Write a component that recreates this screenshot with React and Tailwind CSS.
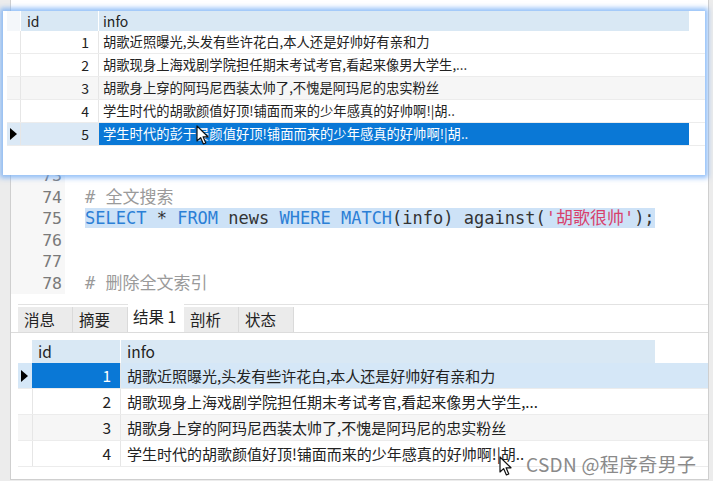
const popupRows = [
  "胡歌近照曝光,头发有些许花白,本人还是好帅好有亲和力",
  "胡歌现身上海戏剧学院担任期末考试考官,看起来像男大学生,...",
  "胡歌身上穿的阿玛尼西装太帅了,不愧是阿玛尼的忠实粉丝",
  "学生时代的胡歌颜值好顶!铺面而来的少年感真的好帅啊!|胡..",
  "学生时代的彭于晏颜值好顶!铺面而来的少年感真的好帅啊!|胡..",
];

const resultRows = popupRows.slice(0, 4);

const cjk = { fontFamily: '"Noto Sans CJK SC", "Liberation Sans", sans-serif' };
const mono = { fontFamily: '"DejaVu Sans Mono", "Noto Sans CJK SC", monospace' };

function Cursor({ className }) {
  return (
    <svg className={className} width="14" height="21" viewBox="0 0 14 21">
      <path
        d="M1 1 L1 16 L4.6 12.6 L7.4 19 L9.8 18 L7.1 11.8 L12 11.8 Z"
        fill="#fff"
        stroke="#111"
        strokeWidth="1.2"
        strokeLinejoin="round"
      />
    </svg>
  );
}

function Triangle() {
  return (
    <svg width="7" height="12" viewBox="0 0 7 12">
      <path d="M0 0 L7 6 L0 12 Z" fill="#000" />
    </svg>
  );
}

function PopupTable() {
  return (
    <div
      className="absolute left-[3px] top-[11px] w-[702px] h-[164px] bg-white pl-[4px] shadow-[0_0_5px_3px_rgba(110,170,245,0.75)]"
      style={cjk}
    >
      {/* header */}
      <div className="flex h-[20px] text-[14px] text-[#222] leading-[20px]">
        <div className="w-[13px] bg-[#f4f7fa]" />
        <div className="w-[78px] bg-[#d9e8f4] border-l border-white pl-[6px]">id</div>
        <div className="w-[591px] bg-[#d9e8f4] border-l border-white pl-[4px]">info</div>
      </div>
      {popupRows.map((text, i) => {
        const selected = i === 4;
        const gray = i === 2;
        return (
          <div
            key={i}
            className={`flex h-[23px] text-[13.3px] leading-[22px] border-b border-[#ececec] ${
              gray ? "bg-[#f6f6f6]" : "bg-white"
            }`}
          >
            <div
              className={`w-[13px] flex items-center pl-[3px] ${
                selected ? "bg-[#dbe9f6]" : ""
              }`}
            >
              {selected && <Triangle />}
            </div>
            <div
              className={`w-[78px] text-right pr-[9px] text-[14px] text-[#222] border-l border-[#e6e6e6] ${
                selected ? "bg-[#dbe9f6]" : ""
              }`}
            >
              {i + 1}
            </div>
            <div
              className={`w-[591px] pl-[4px] whitespace-nowrap overflow-hidden border-l border-[#e6e6e6] ${
                selected ? "bg-[#0a78d6] text-white" : "text-[#222]"
              }`}
            >
              {text}
            </div>
          </div>
        );
      })}
      <Cursor className="absolute left-[193px] top-[114px]" />
    </div>
  );
}

function CodeLine({ n, children, highlight }) {
  return (
    <div className="flex h-[21.5px] leading-[21.5px]">
      <div className="w-[54px] shrink-0 bg-[#f7f7f7] text-right pr-[3px] text-[16.5px] text-[#7a7a7a]">{n}</div>
      <div className="pl-[20px] whitespace-nowrap">
        <span className={highlight ? "bg-[#cde2f7]" : ""}>{children}</span>
      </div>
    </div>
  );
}

function Editor() {
  return (
    <div className="h-[294px] overflow-hidden pt-[165px] text-[17px]" style={mono}>
      <CodeLine n="73"> </CodeLine>
      <CodeLine n="74">
        <span className="text-[#9a9a9a]"># 全文搜索</span>
      </CodeLine>
      <CodeLine n="75" highlight>
        <span className="text-[#2b7fd6]">SELECT</span>
        <span className="text-[#333]"> * </span>
        <span className="text-[#2b7fd6]">FROM</span>
        <span className="text-[#333]"> news </span>
        <span className="text-[#2b7fd6]">WHERE MATCH</span>
        <span className="text-[#333]">(info) against(</span>
        <span className="text-[#d8406c]">'胡歌很帅'</span>
        <span className="text-[#333]">);</span>
      </CodeLine>
      <CodeLine n="76"> </CodeLine>
      <CodeLine n="77"> </CodeLine>
      <CodeLine n="78">
        <span className="text-[#9a9a9a]"># 删除全文索引</span>
      </CodeLine>
      <CodeLine n="79"> </CodeLine>
    </div>
  );
}

function Tabs() {
  const tabs = ["消息", "摘要", "结果 1", "剖析", "状态"];
  return (
    <div
      className="flex items-end h-[39px] pl-[7px] border-b border-[#dcdcdc]"
      style={cjk}
    >
      <div className="flex items-end border-t border-[#e2e2e2] w-full h-[28px]">
        {tabs.map((t, i) =>
          i === 2 ? (
            <div
              key={t}
              className="w-[56px] h-[29px] -mt-[3px] bg-white text-[15.5px] text-[#222] pl-[5px] leading-[26px]"
            >
              {t}
            </div>
          ) : (
            <div
              key={t}
              className="w-[55px] h-[25px] bg-[#ebebeb] border-r border-[#dadada] text-[15.5px] text-[#222] pl-[6px] leading-[25px]"
            >
              {t}
            </div>
          )
        )}
      </div>
    </div>
  );
}

function ResultTable() {
  return (
    <div className="pl-[7px] pt-[7px] text-[15px]" style={cjk}>
      <div className="flex h-[23px] leading-[23px] text-[15.5px] text-[#222]">
        <div className="w-[14px]" />
        <div className="w-[88px] bg-[#d9e8f4] pl-[6px]">id</div>
        <div className="w-[535px] bg-[#d9e8f4] border-l border-white pl-[6px]">info</div>
      </div>
      {resultRows.map((text, i) => {
        const selected = i === 0;
        const gray = i === 2;
        return (
          <div
            key={i}
            className={`flex h-[26px] leading-[25px] border-b border-[#ececec] ${
              selected ? "bg-[#d5e7f7]" : gray ? "bg-[#f6f6f6]" : "bg-white"
            }`}
          >
            <div className="w-[14px] flex items-center pl-[3px]">{selected && <Triangle />}</div>
            <div
              className={`w-[88px] text-right pr-[9px] text-[15.5px] ${
                selected ? "bg-[#0a78d6] text-white" : "text-[#222] border-l border-[#e6e6e6]"
              }`}
            >
              {i + 1}
            </div>
            <div className="w-[535px] pl-[6px] whitespace-nowrap overflow-hidden text-[#222] border-l border-[#e6e6e6]">
              {text}
            </div>
          </div>
        );
      })}
    </div>
  );
}

export default function App() {
  return (
    <div className="relative w-[713px] h-[481px] overflow-hidden bg-[#ececec]">
      <div className="ml-[10px] w-[699px] h-[480px] bg-white border-l border-r border-b border-[#cfcfcf] flex flex-col">
        <Editor />
        <Tabs />
        <ResultTable />
      </div>

      <PopupTable />

      <Cursor className="absolute left-[499px] top-[456px]" />
      <div
        className="absolute left-[526px] top-[450px] text-[19px] text-[#8a8a8a] tracking-[0.3px]"
        style={cjk}
      >
        CSDN @程序奇男子
      </div>
    </div>
  );
}
